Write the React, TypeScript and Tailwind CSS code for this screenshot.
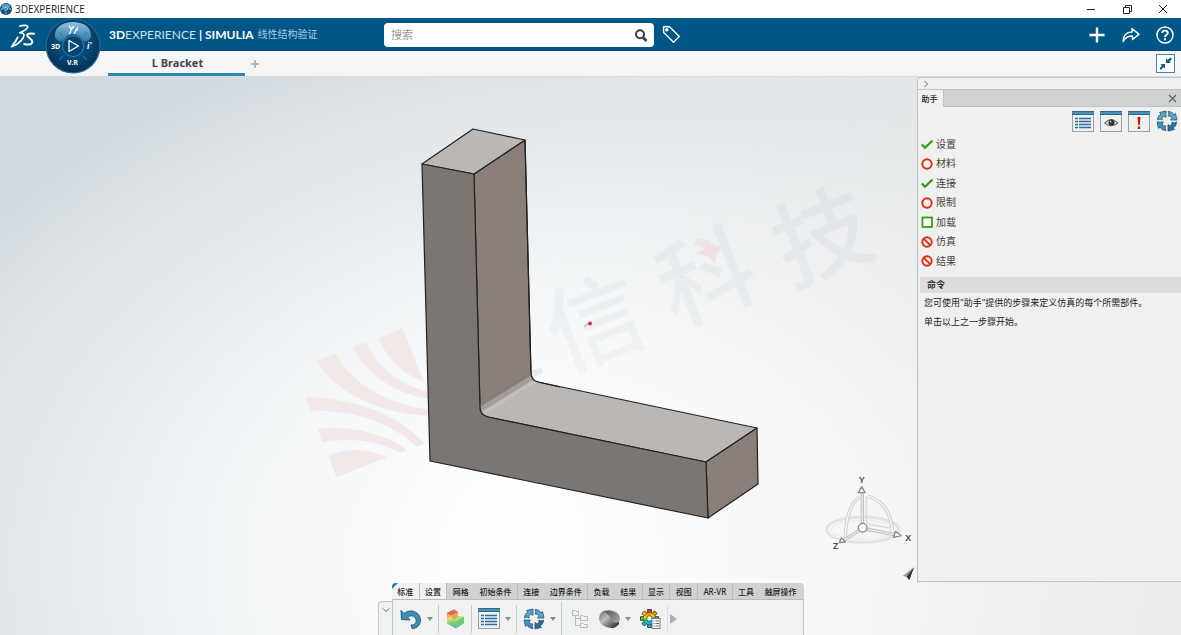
import React from "react";

const LATIN_CJK = "font-['Noto_Sans','Noto_Sans_CJK_SC',sans-serif]";

function DassaultLogo() {
  return (
    <svg viewBox="28 66 74 74" className="h-[25px] w-[25px]" fill="none" stroke="#fff" strokeLinecap="round" strokeLinejoin="round" aria-hidden="true">
      <path d="M57 75C66 72 83 71 80 79C78 86 66 90 58 95" strokeWidth="5" />
      <path d="M58 95C74 94 71 107 61 118C53 127 43 133 33 136C39 129 46 120 51 108" strokeWidth="5" />
      <path d="M99 98C90 96 77 97 79 103C81 109 95 114 94 122C92 131 79 131 70 128" strokeWidth="6" />
    </svg>
  );
}

function Compass() {
  return (
    <svg viewBox="0 0 56 56" className="h-[56px] w-[56px]" aria-hidden="true">
      <defs>
        <radialGradient id="ball" cx="50%" cy="42%" r="60%">
          <stop offset="0" stopColor="#0d6394" />
          <stop offset="0.65" stopColor="#064470" />
          <stop offset="1" stopColor="#022c4c" />
        </radialGradient>
        <linearGradient id="gloss" x1="0" y1="0" x2="0" y2="1">
          <stop offset="0" stopColor="#8fc0df" />
          <stop offset="1" stopColor="#2f78a5" />
        </linearGradient>
      </defs>
      <circle cx="28" cy="28" r="27.5" fill="#1f6690" />
      <circle cx="28" cy="28" r="26.300" fill="url(#ball)" />
      <path d="M10 17C10 9 18 4 28 4C38 4 46 9 46 17C46 22 42 24 38 23C35 18 32 16 28 16C24 16 21 18 18 23C14 24 10 22 10 17Z" fill="url(#gloss)" />
      <circle cx="28" cy="28" r="10.5" fill="#07456f" stroke="#2d83b5" />
      <g stroke="#2f7fae" strokeWidth="1">
        <path d="M14 14L18 18M42 14L38 18M14 42L18 38M42 42L38 38" />
      </g>
      <path d="M24 22.5V33.500L33.500 28Z" fill="#0a4d7a" stroke="#fff" strokeWidth="1.300" strokeLinejoin="round" />
      <path d="M24 8L26.500 11L29 8M26.500 11L24.500 16M29 16L33 9M30 12L33 12" fill="none" stroke="#fff" strokeWidth="1.200" />
      <g fill="#fff" fontFamily="Noto Sans, sans-serif" fontWeight="700" fontSize="7">
        <text x="6" y="31">3D</text>
        <text x="42" y="31" fontSize="8" fontStyle="italic">i<tspan dy="-1">'</tspan></text>
        <text x="22" y="47">V.R</text>
      </g>
    </svg>
  );
}

function TitleBar() {
  return (
    <div className="flex h-[18px] shrink-0 items-center bg-white text-[#222]">
      <svg viewBox="0 0 12 12" className="h-3 w-3" aria-hidden="true">
        <circle cx="6" cy="6" r="6" fill="#0d4f80" />
        <ellipse cx="6" cy="3.500" rx="4" ry="2.500" fill="#5da2cc" />
        <path d="M5 4V8L8 6Z" fill="#0d4f80" stroke="#fff" strokeWidth=".6" />
        <path d="M1 6H3M9 6H11M6 9V10.500" stroke="#cfe3f0" />
      </svg>
      <span className="ml-[3px] font-['Open_Sans',sans-serif] text-[10px] leading-4">3DEXPERIENCE</span>
      <div className="ml-auto flex gap-6 pr-3">
        <button aria-label="最小化" className="h-3 w-3">
          <svg viewBox="0 0 12 12" stroke="#222"><path d="M2 6.500H10" /></svg>
        </button>
        <button aria-label="还原" className="h-3 w-3">
          <svg viewBox="0 0 12 12" fill="none" stroke="#222"><path d="M2.500 4.500H8.500V10.500H2.500ZM4.500 4.500V2.500H10.500V8.500H8.500" /></svg>
        </button>
        <button aria-label="关闭" className="h-3 w-3">
          <svg viewBox="0 0 12 12" stroke="#222"><path d="M2 2L10 10M10 2L2 10" /></svg>
        </button>
      </div>
    </div>
  );
}

function Header() {
  return (
    <header className="relative z-10 flex h-[33px] shrink-0 items-start border-b border-[#0b4468] bg-[#005686] text-white">
      <div className="ml-[10px] mt-[5px]"><DassaultLogo /></div>
      <button aria-label="罗盘" className="ml-[10px]"><Compass /></button>
      <div className="ml-2 flex h-[33px] w-[275px] shrink-0 items-center whitespace-nowrap font-['Lato','Noto_Sans_CJK_SC',sans-serif] text-[12px]">
        <b>3D</b>
        <span className="text-[#cfe1ec]">EXPERIENCE</span>
        <b className="ml-[3px]">|</b>
        <b className="ml-[3px]">SIMULIA</b>
        <span className="ml-1 text-[10px] text-[#a9cbe0]">线性结构验证</span>
      </div>
      <form className="mt-[5px] flex h-6 w-[270px] items-center rounded-sm bg-white" onSubmit={(e) => e.preventDefault()}>
        <input aria-label="搜索" placeholder="搜索" className="min-w-0 flex-1 bg-transparent px-[7px] text-[11px] text-[#333] outline-none placeholder:text-[#999]" />
        <button aria-label="执行搜索" className="mr-[6px]">
          <svg viewBox="0 0 14 14" className="h-[14px] w-[14px]" fill="none" stroke="#3d3d3d" strokeWidth="2">
            <circle cx="6" cy="6.300" r="4" /><path d="M9 9.500L12.500 13" strokeWidth="2.600" />
          </svg>
        </button>
      </form>
      <button aria-label="标签" className="ml-2 mt-[7px]">
        <svg viewBox="0 0 19 19" className="h-[19px] w-[19px]" fill="none" stroke="#fff" strokeWidth="1.400" strokeLinejoin="round">
          <path d="M1.500 2.500Q1.500 1.500 2.500 1.500L7.500 1.700L17.300 11.500L11.500 17.300L1.700 7.500Z" /><circle cx="4.800" cy="4.800" r="1" />
        </svg>
      </button>
      <div className="ml-auto flex h-[33px] items-center gap-4 pr-[7px]">
        <button aria-label="添加">
          <svg viewBox="0 0 18 18" className="h-[18px] w-[18px]" stroke="#fff" strokeWidth="2.400"><path d="M9 1.500V16.500M1.500 9H16.500" /></svg>
        </button>
        <button aria-label="共享">
          <svg viewBox="0 0 18 18" className="h-[18px] w-[18px]" fill="none" stroke="#fff" strokeWidth="1.500" strokeLinejoin="round">
            <path d="M1.200 15.500C1 9.500 4.500 6 10 6V2.500L17 8.300L10.500 13.500V10C6 10 3.200 11.500 1.200 15.500Z" />
          </svg>
        </button>
        <button aria-label="帮助">
          <svg viewBox="0 0 18 18" className="h-[18px] w-[18px]" fill="none" stroke="#fff">
            <circle cx="9" cy="9" r="8" strokeWidth="1.500" />
            <path d="M6.200 7C6.200 3.800 11.800 3.800 11.800 7C11.800 9 9 8.800 9 11" strokeWidth="1.900" /><path d="M9 12.300V14.300" strokeWidth="2" />
          </svg>
        </button>
      </div>
    </header>
  );
}

function TabBar() {
  return (
    <nav className="flex h-[26px] shrink-0 items-stretch border-b border-[#d9dcde] bg-[#f4f5f7]">
      <a href="#bracket" className="ml-[108px] flex w-[137px] items-center justify-center border-b-[3px] border-[#2a86bd] pl-[2px] pt-[2px] text-[11px] font-bold text-[#444]">L Bracket</a>
      <button aria-label="新选项卡" className="ml-[5px]">
        <svg viewBox="0 0 10 10" className="h-[10px] w-[10px]" stroke="#a8a8a8" strokeWidth="1.500"><path d="M5 1V9M1 5H9" /></svg>
      </button>
      <button aria-label="退出全屏" className="ml-auto mr-[6px] mt-[3px] h-[19px] w-[19px] border border-[#4386af] bg-white">
        <svg viewBox="0 0 17 17" fill="#0b5a88">
          <path d="M9 8V3.500L10.500 5L13.500 2.500L15 4L12.500 6.500L14 8Z" /><path d="M8 9V13.500L6.500 12L4 15L2.500 13.500L5 10.500L3.500 9Z" />
        </svg>
      </button>
    </nav>
  );
}

function Scene() {
  return (
    <svg viewBox="0 77 1181 558" preserveAspectRatio="xMidYMid slice" className="absolute inset-0 h-full w-full" role="img" aria-label="L Bracket">
      <defs>
        <radialGradient id="sky" gradientUnits="userSpaceOnUse" cx="0" cy="0" r="1" gradientTransform="translate(680 560) scale(860 570)">
          <stop offset="0" stopColor="#ffffff" />
          <stop offset="0.25" stopColor="#fefefe" />
          <stop offset="0.6" stopColor="#eff2f4" />
          <stop offset="0.85" stopColor="#dfe4e7" />
          <stop offset="1" stopColor="#d3dadf" />
        </radialGradient>
        <linearGradient id="warm" x1="0" x2="1" y1="0" y2="0">
          <stop offset="0.45" stopColor="#e6e6e6" stopOpacity="0" />
          <stop offset="1" stopColor="#ebebeb" stopOpacity=".8" />
        </linearGradient>
        <linearGradient id="fillet" gradientUnits="userSpaceOnUse" x1="500" y1="388" x2="508" y2="401">
          <stop offset="0" stopColor="#8a7f79" />
          <stop offset=".3" stopColor="#857c77" />
          <stop offset=".45" stopColor="#aaa29e" />
          <stop offset=".6" stopColor="#9f9995" />
          <stop offset=".78" stopColor="#c6c3c1" />
          <stop offset="1" stopColor="#bab7b4" />
        </linearGradient>
      </defs>
      <rect y="77" width="1181" height="558" fill="url(#sky)" />
      <rect y="77" width="1181" height="558" fill="url(#warm)" />

      <g transform="translate(290 310) scale(.33333)" fill="#f3e8e8">
        <path d="M267 85L338 54L402 217C335 190 290 145 267 85Z" />
        <path d="M189 112L228 96C260 170 330 225 415 245V267C310 248 230 195 189 112Z" />
        <path d="M80 153L136 131C190 225 300 290 440 300V320C280 312 150 262 80 153Z" />
        <path d="M47 262C200 264 330 318 404 401L382 411C300 335 190 300 60 302Z" />
        <path d="M84 356C180 346 290 370 350 420L330 430C270 393 190 380 97 397Z" />
        <path d="M115 438C165 412 240 415 291 442L140 502Z" />
      </g>
      <g fill="#3a4060" fillOpacity=".038" fontFamily="Noto Sans CJK SC, sans-serif" fontWeight="500" fontSize="96" textAnchor="middle">
        <text transform="translate(594 322) rotate(-21)" y="36">信</text>
        <text transform="translate(706 276) rotate(-21)" y="36">科</text>
        <text transform="translate(822 236) rotate(-21)" y="36">技</text>
      </g>
      <path d="M531 371L541 368L543 373L534 377Z" fill="#e9eaee" />
      <path d="M706 238L712 247L724 246L716 254L715 264L708 256L696 254L705 248Z" fill="#f2dfdf" />
      <path d="M584 327L589 323" stroke="#bbb" strokeWidth="1.500" />
      <circle cx="590" cy="323.500" r="2" fill="#e12b3e" />

      <g stroke="#222120" strokeWidth="1.200" strokeLinejoin="round">
        <path d="M474 174L525 140L531 374Q532 380 538 382L488 417Q480 416 480 408Z" fill="#8a7f79" />
        <path d="M488 417L538 382L757 428L706 462Z" fill="#bab7b4" />
        <path d="M480 404L531 371Q532 380 540 382L490 417Q480 415 480 404Z" fill="url(#fillet)" stroke="none" />
        <path d="M422 164L473 129L525 140L474 174Z" fill="#bab7b4" />
        <path d="M706 462L757 428L758 484L708 518Z" fill="#8a7f79" />
        <path d="M422 164L474 174L480 408Q480 415 488 417L706 462L708 518L430 461Z" fill="#7b7672" />
        <path d="M525 140L531 374Q532 381 538 382L560 387" fill="none" />
      </g>

      <g transform="translate(800 460) scale(.33333)" fill="none">
        <ellipse cx="188" cy="209" rx="108" ry="38" stroke="#e2e3e4" strokeWidth="9" />
        <ellipse cx="188" cy="209" rx="94" ry="28" stroke="#ebeced" strokeWidth="4" />
        <path d="M178 112C150 130 136 180 136 240M204 108C240 120 272 150 277 210" stroke="#c9caca" strokeWidth="10" />
        <path d="M178 112C150 130 136 180 136 240M204 108C240 120 272 150 277 210" stroke="#f6f6f6" strokeWidth="5" />
        <path d="M199 108V185Q202 192 212 194L270 204" stroke="#d9dada" strokeWidth="4" />
        <path d="M187 98V192M198 207L284 224M178 211L134 239" stroke="#bfc0c0" strokeWidth="10" />
        <path d="M187 98V192M198 207L284 224M178 211L134 239" stroke="#e6e7e7" strokeWidth="4" />
        <g fill="#fff" stroke="#898989" strokeWidth="4" strokeLinejoin="round">
          <path d="M185 80L195 98H175Z" /><path d="M304 227L281 232L286 214Z" /><path d="M118 248L124 233L136 246Z" /><circle cx="188" cy="203" r="13" />
        </g>
        <path d="M308 348L342 322L328 360L320 350Z" fill="#999" />
        <path d="M342 322L328 360L320 350Z" fill="#333" />
        <g fill="#4a4a4a" fontFamily="Noto Sans, sans-serif" fontWeight="600" fontSize="28">
          <text x="177" y="68">Y</text><text x="316" y="242">X</text><text x="99" y="268">Z</text>
        </g>
      </g>
    </svg>
  );
}

function CycleArrows() {
  const arrow = "M1.500 10C1.500 7 3 5 5 4L3.500 2.500L10 1V7.500L8 6C6.500 7 6 8 6 10L4 9Z";
  return (
    <svg viewBox="0 0 22 22" className="h-[22px] w-[22px]" fill="#5aa5c9" stroke="#1f5675" strokeWidth=".8" strokeLinejoin="round" aria-hidden="true">
      <path d={arrow} />
      <path d={arrow} transform="rotate(90 11 11)" />
      <path d={arrow} transform="rotate(180 11 11)" fill="#2b6f94" />
      <path d={arrow} transform="rotate(270 11 11)" fill="#4290b6" />
    </svg>
  );
}

function WindowIcon({ children }: { children: React.ReactNode }) {
  return (
    <svg viewBox="0 0 22 21" className="h-[21px] w-[22px]" aria-hidden="true">
      <rect x=".5" y=".5" width="21" height="20" fill="#eef0f1" stroke="#9a9fa3" />
      <rect width="22" height="4" fill="#4a8fb5" />
      <path d="M0 .5H22M0 3.500H22" stroke="#2f6887" />
      {children}
    </svg>
  );
}

function ListGlyph() {
  return (
    <WindowIcon>
      <path d="M3 7.500H19M3 10.500H19M3 13.500H19M3 16.500H19" stroke="#2471a0" strokeWidth="1.600" />
      <path d="M6.500 6V18" stroke="#f2f4f5" />
    </WindowIcon>
  );
}

type State = "done" | "required" | "optional" | "blocked";

const STEPS: { name: string; state: State }[] = [
  { name: "设置", state: "done" },
  { name: "材料", state: "required" },
  { name: "连接", state: "done" },
  { name: "限制", state: "required" },
  { name: "加载", state: "optional" },
  { name: "仿真", state: "blocked" },
  { name: "结果", state: "blocked" },
];

function StateIcon({ state }: { state: State }) {
  return (
    <svg viewBox="0 0 12 12" className="h-3 w-3" fill="none" aria-hidden="true">
      {state === "done" && <path d="M.8 6.500L4 9.800L11.500 2.500" stroke="#2f9a10" strokeWidth="2.200" />}
      {state === "required" && <circle cx="6" cy="6" r="4.700" stroke="#e02c12" strokeWidth="1.900" />}
      {state === "optional" && <rect x="1.500" y="1.500" width="9.500" height="9.500" fill="#fff" stroke="#35a010" strokeWidth="1.800" />}
      {state === "blocked" && <path d="M6 1.300A4.700 4.700 0 1 1 6 10.700A4.700 4.700 0 1 1 6 1.300M2.800 2.800L9.200 9.200" stroke="#e02c12" strokeWidth="1.900" />}
    </svg>
  );
}

function Assistant() {
  return (
    <aside className="relative flex w-[264px] shrink-0 flex-col self-stretch rounded-tl-[4px] border border-r-0 border-[#bfc3c6] bg-[#f0f0f0]">
      <button aria-label="折叠面板" className="flex h-[11px] shrink-0 items-center pl-[5px]">
        <svg viewBox="0 0 6 8" className="h-[8px] w-[6px]" fill="none" stroke="#666"><path d="M1.500 1L4.500 4L1.500 7" /></svg>
      </button>
      <div className="flex h-[18px] shrink-0 items-stretch border-b border-t border-[#bfc3c6] bg-[#cfd2d3]">
        <button className="-mb-px w-[26px] border-r border-[#bfc3c6] bg-[#f0f0f0] pr-[2px] text-[8px] font-medium text-[#222]">助手</button>
        <button aria-label="关闭面板" className="ml-auto mr-1">
          <svg viewBox="0 0 9 9" className="h-[9px] w-[9px]" stroke="#666" strokeWidth="1.300"><path d="M1 1L8 8M8 1L1 8" /></svg>
        </button>
      </div>
      <div className="mt-[3px] flex h-[22px] shrink-0 items-center justify-end gap-[6px] pr-[3px]">
        <button aria-label="列表"><ListGlyph /></button>
        <button aria-label="显示">
          <WindowIcon>
            <path d="M4.500 12Q11 5 18 12Q11 17.500 4.500 12Z" fill="#ccc" stroke="#555" />
            <circle cx="11.500" cy="11.500" r="3" fill="#333" /><circle cx="10.600" cy="10.600" r=".9" fill="#ddd" />
          </WindowIcon>
        </button>
        <button aria-label="警告">
          <WindowIcon><path d="M9.500 6H12.500L11.800 14H10.200ZM9.800 15.500H12.200V18H9.800Z" fill="#c5151d" /></WindowIcon>
        </button>
        <button aria-label="更新"><CycleArrows /></button>
      </div>
      <ul className="mt-[3px] flex min-h-[135px] shrink-0 flex-col justify-between pl-[3px]">
        {STEPS.map((s) => (
          <li key={s.name}>
            <button className="flex h-[18px] items-center gap-[3px] text-[10px] text-[#444]">
              <StateIcon state={s.state} />
              {s.name}
            </button>
          </li>
        ))}
      </ul>
      <h2 className="ml-[2px] mt-[7px] h-4 shrink-0 bg-[#dcdcdc] pl-[7px] text-[9px] font-bold leading-4 text-[#333]">命令</h2>
      <div className="whitespace-nowrap pl-[6px] text-[9px] leading-[19px] text-[#222]">
        <p>您可使用&quot;助手&quot;提供的步骤来定义仿真的每个所需部件。</p>
        <p>单击以上之一步骤开始。</p>
      </div>
    </aside>
  );
}

const TOOL_TABS: { name: string; active?: boolean; divider?: boolean }[] = [
  { name: "标准", active: true, divider: true },
  { name: "设置", active: true, divider: true },
  { name: "网格" },
  { name: "初始条件", divider: true },
  { name: "连接" },
  { name: "边界条件", divider: true },
  { name: "负载" },
  { name: "结果", divider: true },
  { name: "显示", divider: true },
  { name: "视图", divider: true },
  { name: "AR-VR", divider: true },
  { name: "工具" },
  { name: "触屏操作" },
];

function Caret() {
  return (
    <button aria-label="更多选项" className="flex w-4 items-center justify-center">
      <svg viewBox="0 0 6 4" className="h-1 w-[6px]" fill="#8a8a8a"><path d="M0 0H6L3 4Z" /></svg>
    </button>
  );
}

function Divider() {
  return <span className="h-7 w-px bg-[#c8cbcd]" />;
}

const TEETH = [
  { angle: 0, color: "#ee3a12" },
  { angle: 45, color: "#f0a000" },
  { angle: 90, color: "#30d010" },
  { angle: 135, color: "#20c040" },
  { angle: 180, color: "#12b8c0" },
  { angle: 225, color: "#10b8d8" },
  { angle: 270, color: "#50d010" },
  { angle: 315, color: "#f0d800" },
];

function GearIcon() {
  return (
    <svg viewBox="0 0 21 20" className="h-5 w-[21px]" aria-hidden="true">
      <defs>
        <linearGradient id="rainbow" x1="0" y1="0" x2=".2" y2="1">
          <stop offset=".1" stopColor="#ff8a00" /><stop offset=".35" stopColor="#f4e400" /><stop offset=".6" stopColor="#38d010" /><stop offset=".9" stopColor="#10b8d8" />
        </linearGradient>
      </defs>
      {TEETH.map((t) => (
        <rect key={t.angle} x="7.700" y=".6" width="3.600" height="5" fill={t.color} stroke="#222" strokeWidth=".8" transform={`rotate(${t.angle} 9.500 9.500)`} />
      ))}
      <circle cx="9.500" cy="9.500" r="6" fill="none" stroke="#222" strokeWidth=".8" />
      <circle cx="9.500" cy="9.500" r="4.400" fill="none" stroke="url(#rainbow)" strokeWidth="3.200" />
      <circle cx="9.500" cy="9.500" r="2.800" fill="#f0f1f1" stroke="#222" strokeWidth=".7" />
      <rect x="12" y="9.500" width="8" height="10" fill="#fff" stroke="#777" />
      <path d="M13.500 12H14.500M15.500 12H19M13.500 14.500H14.500M15.500 14.500H19M13.500 17H14.500M15.500 17H19" stroke="#666" />
    </svg>
  );
}

function Toolbar() {
  return (
    <div className="absolute bottom-0 left-[378px] flex items-end">
      <button aria-label="折叠工具栏" className="flex h-[34px] w-[14px] justify-center rounded-tl-[4px] border border-b-0 border-r-0 border-[#c2c5c7] bg-[#f0f1f1] pt-[5px]">
        <svg viewBox="0 0 8 6" className="h-[6px] w-2" fill="none" stroke="#666"><path d="M1 1.500L4 4.500L7 1.500" /></svg>
      </button>
      <div className="w-[412px]">
        <div className="relative flex h-[17px] overflow-hidden rounded-t-sm border-b border-[#b9bcbe] bg-[#cfd2d3] pr-[2px]">
          {TOOL_TABS.map((t) => (
            <button
              key={t.name}
              className={
                "flex-auto whitespace-nowrap pt-px text-[8px] font-medium text-[#222] " +
                (t.active ? "bg-[#f0f1f1] " : "") +
                (t.divider ? "border-r border-[#b9bcbe]" : "")
              }
            >
              {t.name}
            </button>
          ))}
          <svg viewBox="0 0 6 6" className="absolute left-0 top-0 h-[6px] w-[6px]" fill="#1f7bbb"><path d="M0 0H6L0 6Z" /></svg>
        </div>
        <div className="flex h-[35px] items-center border-x border-[#c2c5c7] bg-[#f0f1f1] pl-[7px] pt-[2px]">
          <button aria-label="撤消">
            <svg viewBox="0 0 22 22" className="h-[22px] w-[22px]" fill="#3d8db5" stroke="#1e5674" strokeWidth=".9" strokeLinejoin="round">
              <path d="M1 2.500L4 5.500C11 0 20 4 20.500 12C20.500 17 17 20.500 12 20.500L11 17C14.500 17 17 15 16 11.500C15 7.500 10.500 7 7.500 9L10 12L1.500 11.500Z" />
            </svg>
          </button>
          <Caret />
          <Divider />
          <button aria-label="云图" className="ml-[7px] mr-[5px]">
            <svg viewBox="0 0 20 22" className="h-[22px] w-5">
              <defs>
                <linearGradient id="contour" x1="0" y1="0" x2=".2" y2="1">
                  <stop offset=".05" stopColor="#e8615a" /><stop offset=".3" stopColor="#f2a653" /><stop offset=".5" stopColor="#e8dc64" /><stop offset=".75" stopColor="#77cb77" /><stop offset="1" stopColor="#62aebd" />
                </linearGradient>
              </defs>
              <path d="M1 5L8 1.500L12 4V9L18 8.500V15L10 20.500L1 15.500Z" fill="url(#contour)" />
              <path d="M1 5L8 1.500L12 4L5 7.500Z" fill="#e0655b" />
              <path d="M5 7.500L12 4V9L8 12Z" fill="#dfa955" />
              <path d="M8 12L12 8L18 9L10 13.500Z" fill="#b5dd74" />
              <path d="M10 13.500L18 9V15L10 20.500Z" fill="#70c981" />
            </svg>
          </button>
          <Divider />
          <button aria-label="特征管理器" className="ml-[6px]"><ListGlyph /></button>
          <Caret />
          <Divider />
          <button aria-label="更新" className="ml-[6px]"><CycleArrows /></button>
          <Caret />
          <span className="h-[34px] w-px bg-[#c8cbcd]" />
          <button aria-label="结构树" className="ml-[9px]">
            <svg viewBox="0 0 19 20" className="h-5 w-[19px]" fill="none" stroke="#b8babb">
              <path d="M1.500 1.500H4L5 2.500H7.500V6.500H1.500ZM9.500 6.500H12L13 7.500H16.500V11.500H9.500ZM9.500 14.500H12L13 15.500H16.500V18.500H9.500ZM4.500 6.500V16.500H9.500M4.500 9.500H9.500" />
            </svg>
          </button>
          <button aria-label="材料" className="ml-2">
            <svg viewBox="0 0 22 20" className="h-5 w-[22px]">
              <defs>
                <linearGradient id="metal" x1="0" y1="0" x2="1" y2="1"><stop offset="0" stopColor="#666" /><stop offset=".4" stopColor="#bbb" /><stop offset=".65" stopColor="#777" /><stop offset="1" stopColor="#111" /></linearGradient>
                <linearGradient id="cap" x1="0" y1="0" x2="1" y2="1"><stop offset="0" stopColor="#555" /><stop offset="1" stopColor="#aaa" /></linearGradient>
              </defs>
              <path d="M1 10Q1 1 11 1Q20 1 21.500 8L21 15Q17 20 13 19Q2 18 1 10Z" fill="url(#metal)" />
              <path d="M6 3Q15 -1 21.500 8L21 13Q17 15 14 12Q11 5 6 3Z" fill="url(#cap)" />
            </svg>
          </button>
          <Caret />
          <button aria-label="仿真设置" className="ml-1"><GearIcon /></button>
          <span className="ml-[6px] h-7 w-px bg-[#dcdedf]" />
          <button aria-label="展开" className="ml-[2px]">
            <svg viewBox="0 0 7 10" className="h-[10px] w-[7px]" fill="#aaadb2"><path d="M0 0L7 5L0 10Z" /></svg>
          </button>
        </div>
      </div>
    </div>
  );
}

export default function App() {
  return (
    <div className={"flex h-screen flex-col overflow-hidden bg-white " + LATIN_CJK}>
      <TitleBar />
      <Header />
      <TabBar />
      <main className="relative flex min-h-0 flex-1 justify-end pb-[53px]">
        <Scene />
        <Assistant />
        <Toolbar />
      </main>
    </div>
  );
}
